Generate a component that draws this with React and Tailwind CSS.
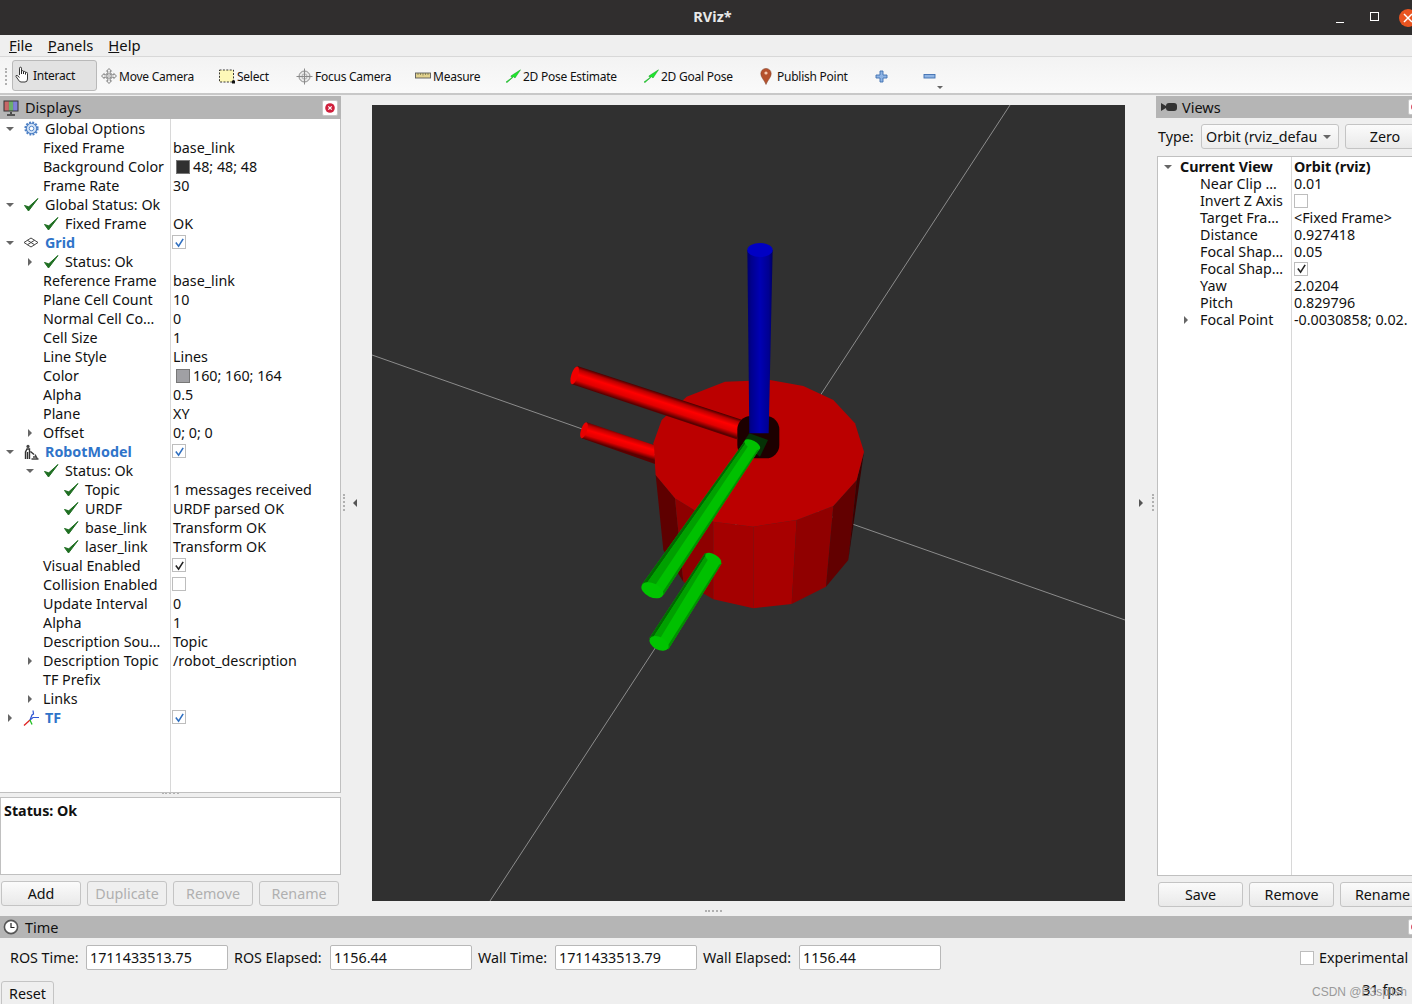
import { Fragment } from 'react';

const FONT = 'font-["Noto_Sans",sans-serif]';

function Check({ className = 'w-4 h-4' }) {
  return (
    <svg viewBox="0 0 16 16" className={className}>
      <path d="M1.5 8.5 L5.5 14 L15 1.5 L5.8 9.8 Z" fill="#1f6f22" stroke="#1f6f22" strokeWidth="1" strokeLinejoin="round" />
    </svg>
  );
}

function Gear() {
  return (
    <svg viewBox="0 0 16 16" className="w-[15px] h-[15px]">
      <circle cx="8" cy="8" r="5.6" fill="#cfe0f5" stroke="#4c7fc4" strokeWidth="1.2" />
      <circle cx="8" cy="8" r="6.6" fill="none" stroke="#4c7fc4" strokeWidth="2" strokeDasharray="2 1.46" />
      <circle cx="8" cy="8" r="2.4" fill="#fff" stroke="#4c7fc4" />
    </svg>
  );
}

function GridIcon() {
  return (
    <svg viewBox="0 0 16 16" className="w-4 h-4">
      <path d="M8 3 L15 7.5 L8 12 L1 7.5 Z M4.5 5.3 L11.5 9.7 M11.5 5.3 L4.5 9.7" fill="none" stroke="#444" strokeWidth="1" />
    </svg>
  );
}

function RobotIcon() {
  return (
    <svg viewBox="0 0 16 16" className="w-4 h-4">
      <circle cx="5" cy="2.4" r="1.6" fill="#444" />
      <path d="M2.5 15 V8 L4 5 H6.5 V15 M4.5 8 V15 M7.5 7.5 L11 10.5" fill="none" stroke="#333" strokeWidth="1.4" />
      <path d="M8.5 15 H15.5 M12 10.5 L14.5 15 M10 13 H13" fill="none" stroke="#444" strokeWidth="1.4" />
    </svg>
  );
}

function TfIcon() {
  return (
    <svg viewBox="0 0 16 16" className="w-4 h-4">
      <path d="M7 10 L1 15.5" stroke="#e02020" strokeWidth="1.3" />
      <path d="M7 10 L9 5 L10.5 4 L10 .5" stroke="#2f55d4" strokeWidth="1.2" fill="none" />
      <path d="M7 10 L10 7.5 H16" stroke="#2f55d4" strokeWidth="1.2" fill="none" />
      <path d="M7 10 L9 14.5" stroke="#20c020" strokeWidth="1.3" />
    </svg>
  );
}

function CheckBox({ checked, blue }) {
  return (
    <span className="inline-flex w-[14px] h-[14px] items-center justify-center border border-[#bdbdbd] bg-white">
      {checked && (
        <svg viewBox="0 0 12 12" className="w-[11px] h-[11px]">
          <path d="M2 6 L5 10 L10 2" fill="none" stroke={blue ? '#2f6fc0' : '#222'} strokeWidth="1.7" />
        </svg>
      )}
    </span>
  );
}

function Arrow({ dir }) {
  if (dir === 'down') {
    return <span className="w-0 h-0 border-l-[4px] border-r-[4px] border-t-[4px] border-l-transparent border-r-transparent border-t-[#666]" />;
  }
  if (dir === 'right') {
    return <span className="w-0 h-0 border-t-[4px] border-b-[4px] border-l-[4px] border-t-transparent border-b-transparent border-l-[#666]" />;
  }
  return null;
}

const indent = ['pl-[5px]', 'pl-[25px]', 'pl-[45px]'];

const displayRows = [
  { d: 0, arrow: 'down', icon: <Gear />, name: 'Global Options' },
  { d: 1, name: 'Fixed Frame', value: 'base_link' },
  { d: 1, name: 'Background Color', swatch: '#303030', value: '48; 48; 48' },
  { d: 1, name: 'Frame Rate', value: '30' },
  { d: 0, arrow: 'down', icon: <Check />, name: 'Global Status: Ok' },
  { d: 1, icon: <Check />, name: 'Fixed Frame', value: 'OK' },
  { d: 0, arrow: 'down', icon: <GridIcon />, name: 'Grid', link: true, box: 'blue' },
  { d: 1, arrow: 'right', icon: <Check />, name: 'Status: Ok' },
  { d: 1, name: 'Reference Frame', value: 'base_link' },
  { d: 1, name: 'Plane Cell Count', value: '10' },
  { d: 1, name: 'Normal Cell Co…', value: '0' },
  { d: 1, name: 'Cell Size', value: '1' },
  { d: 1, name: 'Line Style', value: 'Lines' },
  { d: 1, name: 'Color', swatch: '#a0a0a4', value: '160; 160; 164' },
  { d: 1, name: 'Alpha', value: '0.5' },
  { d: 1, name: 'Plane', value: 'XY' },
  { d: 1, arrow: 'right', name: 'Offset', value: '0; 0; 0' },
  { d: 0, arrow: 'down', icon: <RobotIcon />, name: 'RobotModel', link: true, box: 'blue' },
  { d: 1, arrow: 'down', icon: <Check />, name: 'Status: Ok' },
  { d: 2, icon: <Check />, name: 'Topic', value: '1 messages received' },
  { d: 2, icon: <Check />, name: 'URDF', value: 'URDF parsed OK' },
  { d: 2, icon: <Check />, name: 'base_link', value: 'Transform OK' },
  { d: 2, icon: <Check />, name: 'laser_link', value: 'Transform OK' },
  { d: 1, name: 'Visual Enabled', box: 'on' },
  { d: 1, name: 'Collision Enabled', box: 'off' },
  { d: 1, name: 'Update Interval', value: '0' },
  { d: 1, name: 'Alpha', value: '1' },
  { d: 1, name: 'Description Sou…', value: 'Topic' },
  { d: 1, arrow: 'right', name: 'Description Topic', value: '/robot_description' },
  { d: 1, name: 'TF Prefix' },
  { d: 1, arrow: 'right', name: 'Links' },
  { d: 0, arrow: 'right', icon: <TfIcon />, name: 'TF', link: true, box: 'blue' },
];

const viewRows = [
  { value: '0.01', name: 'Near Clip …' },
  { name: 'Invert Z Axis', box: 'off' },
  { name: 'Target Fra…', value: '<Fixed Frame>' },
  { name: 'Distance', value: '0.927418' },
  { name: 'Focal Shap…', value: '0.05' },
  { name: 'Focal Shap…', box: 'on' },
  { name: 'Yaw', value: '2.0204' },
  { name: 'Pitch', value: '0.829796' },
  { name: 'Focal Point', value: '-0.0030858; 0.02.', arrow: true },
];

function ValueCell({ row }) {
  return (
    <div className="flex-1 h-full flex items-center pl-[3px] whitespace-nowrap overflow-hidden">
      {row.swatch && (
        <span className={`w-[14px] h-[14px] ml-[3px] mr-[3px] border border-[#777] ${row.swatch === '#303030' ? 'bg-[#303030]' : 'bg-[#a0a0a4]'}`} />
      )}
      {row.value}
      {row.box && <span className="-ml-[1px] -mt-[1px] flex"><CheckBox checked={row.box !== 'off'} blue={row.box === 'blue'} /></span>}
    </div>
  );
}

function DisplayRow({ row }) {
  return (
    <div className="flex h-[19px]">
      <div className={`w-[170px] shrink-0 flex items-center whitespace-nowrap overflow-hidden ${indent[row.d]}`}>
        <span className="w-[10px] shrink-0 flex justify-center"><Arrow dir={row.arrow} /></span>
        <span className="ml-[8px]" />
        {row.icon && <span className="w-4 mr-[6px] shrink-0 flex justify-center">{row.icon}</span>}
        <span className={row.link ? 'font-bold text-[#2f74c9]' : ''}>{row.name}</span>
      </div>
      <ValueCell row={row} />
    </div>
  );
}

function QtButton({ children, disabled, className = '' }) {
  return (
    <button className={`h-[25px] shrink-0 rounded-[3px] border border-[#c4c4c4] text-center ${disabled ? 'text-[#b0b0b0] bg-[#efefef]' : 'text-[#111] bg-gradient-to-b from-[#fbfbfb] to-[#e9e9e9] border-[#b8b8b8]'} ${className}`}>
      {children}
    </button>
  );
}

function CloseBtn() {
  return (
    <span className="w-[16px] h-[16px] rounded-[2px] bg-white border border-[#c8c8c8] flex items-center justify-center shrink-0">
      <svg viewBox="0 0 10 10" className="w-[10px] h-[10px]">
        <circle cx="5" cy="5" r="4.8" fill="#d0203c" />
        <path d="M3.3 3.3 L6.7 6.7 M6.7 3.3 L3.3 6.7" stroke="#fff" strokeWidth="1.2" />
      </svg>
    </span>
  );
}

function Monitor() {
  return (
    <svg viewBox="0 0 16 16" className="w-4 h-4">
      <rect x="0.5" y="0.5" width="15" height="11" fill="#333" />
      <rect x="1.5" y="1.5" width="4.4" height="9" fill="#c86868" />
      <rect x="5.9" y="1.5" width="4.2" height="9" fill="#6cae6c" />
      <rect x="10.1" y="1.5" width="4.4" height="9" fill="#8080d8" />
      <path d="M8 12 V14 M4 15 H12" stroke="#333" strokeWidth="1.6" />
    </svg>
  );
}

function HandIcon() {
  return (
    <svg viewBox="0 0 16 18" className="w-4 h-[18px]">
      <path d="M4.5 9 V2.2 a1 1 0 0 1 2 0 V8 V5.6 a1 1 0 0 1 2 0 V8 V6.4 a1 1 0 0 1 2 0 V8.4 V7.4 a1 1 0 0 1 2 0 V13 q0 3 -2.5 3 H6 q-1.5 0 -2.5 -2 L1 10.5 q-.3 -1.5 1.2 -1 L4.5 11.5" fill="#fff" stroke="#222" strokeWidth="0.9" />
    </svg>
  );
}

function MoveIcon() {
  return (
    <svg viewBox="0 0 16 16" className="w-4 h-4">
      <path d="M8 .5 L10.5 3.2 H9.2 V6.8 H12.8 V5.5 L15.5 8 L12.8 10.5 V9.2 H9.2 V12.8 H10.5 L8 15.5 L5.5 12.8 H6.8 V9.2 H3.2 V10.5 L.5 8 L3.2 5.5 V6.8 H6.8 V3.2 H5.5 Z" fill="#f3f3f3" stroke="#666" strokeWidth="0.8" />
      <path d="M5 5.5 H11 M5 8 H11 M5 10.5 H11 M5.5 5 V11 M8 5 V11 M10.5 5 V11" stroke="#999" strokeWidth="0.5" />
    </svg>
  );
}

function SelectIcon() {
  return (
    <svg viewBox="0 0 16 15" className="w-4 h-[15px]">
      <rect x="0.5" y="1" width="14" height="12" fill="#fdf8b8" stroke="#222" strokeWidth="0.9" strokeDasharray="2 1.4" />
      <rect x="13" y="11.5" width="3" height="3" fill="#111" />
    </svg>
  );
}

function FocusIcon() {
  return (
    <svg viewBox="0 0 17 17" className="w-[17px] h-[17px]">
      <circle cx="8.5" cy="8.5" r="5.5" fill="#e8e8e8" stroke="#8a8a8a" />
      <circle cx="8.5" cy="8.5" r="2.6" fill="none" stroke="#999" strokeWidth="0.7" />
      <path d="M8.5 .5 V16.5 M.5 8.5 H16.5" stroke="#8a8a8a" strokeWidth="1" />
    </svg>
  );
}

function RulerIcon() {
  return (
    <svg viewBox="0 0 16 16" className="w-4 h-4">
      <rect x="0.5" y="5" width="15" height="5" fill="#e2d28e" stroke="#5a5a5a" strokeWidth="0.9" />
      <path d="M3 5 V7 M5.5 5 V7 M8 5 V7.5 M10.5 5 V7 M13 5 V7" stroke="#6a6a4a" strokeWidth="0.7" />
    </svg>
  );
}

function GreenArrow() {
  return (
    <svg viewBox="0 0 16 14" className="w-4 h-[14px]">
      <path d="M1 13 L7 8.5 L5.8 7 L15.5 .8 L10 9 L8.6 7.8 L2 13.6 Z" fill="#1de82c" stroke="#129a1e" strokeWidth="0.5" />
    </svg>
  );
}

function PinIcon() {
  return (
    <svg viewBox="0 0 12 17" className="w-[12px] h-[17px]">
      <path d="M6 16.5 C4 11.5 .8 9.5 .8 5.6 A5.2 5.2 0 0 1 11.2 5.6 C11.2 9.5 8 11.5 6 16.5 Z" fill="#b5512d" stroke="#7a3a22" strokeWidth="0.5" />
      <circle cx="6" cy="5" r="1.6" fill="#f4c9b0" />
    </svg>
  );
}

function PlusIcon() {
  return (
    <svg viewBox="0 0 13 13" className="w-[13px] h-[13px]">
      <path d="M5 1 H8 V5 H12 V8 H8 V12 H5 V8 H1 V5 H5 Z" fill="#8fb4e4" stroke="#3f6fb0" strokeWidth="0.9" />
    </svg>
  );
}

function MinusIcon() {
  return (
    <svg viewBox="0 0 13 13" className="w-[13px] h-[13px]">
      <rect x="1" y="4.5" width="11" height="3.5" fill="#8fb4e4" stroke="#3f6fb0" strokeWidth="0.9" />
    </svg>
  );
}

const tools = [
  { label: 'Move Camera', icon: <MoveIcon />, w: 'w-[118px]' },
  { label: 'Select', icon: <SelectIcon />, w: 'w-[77px]' },
  { label: 'Focus Camera', icon: <FocusIcon />, w: 'w-[119px]' },
  { label: 'Measure', icon: <RulerIcon />, w: 'w-[90px]' },
  { label: '2D Pose Estimate', icon: <GreenArrow />, w: 'w-[138px]', gap: 'gap-[2px]' },
  { label: '2D Goal Pose', icon: <GreenArrow />, w: 'w-[117px]', gap: 'gap-[2px]' },
  { label: 'Publish Point', icon: <PinIcon />, w: 'w-[115px]', gap: 'gap-[5px]' },
];

// reference-crop coordinates, scaled by the group transform
const pts = (list) => list.map((p) => p.join(',')).join(' ');

function Scene() {
  const facets = [
    ['#5e0000', [[347, 735], [405, 805], [430, 1055], [370, 960]]],
    ['#8e0000', [[405, 805], [520, 875], [520, 1108], [430, 1055]]],
    ['#a40000', [[520, 875], [640, 890], [640, 1135], [520, 1108]]],
    ['#a80000', [[640, 890], [770, 870], [755, 1122], [640, 1135]]],
    ['#900000', [[770, 870], [880, 828], [858, 1070], [755, 1122]]],
    ['#620000', [[880, 828], [950, 750], [925, 990], [858, 1070]]],
    ['#3c0000', [[950, 750], [972, 665], [925, 990]]],
  ];
  const top = [[340, 640], [365, 570], [440, 500], [555, 455], [690, 450], [790, 468], [880, 510], [945, 580], [972, 665], [950, 750], [880, 828], [770, 870], [640, 890], [520, 875], [405, 805], [347, 735]];
  return (
    <svg viewBox="372 105 753 796" className="w-[753px] h-[796px] block">
      <defs>
        <linearGradient id="blueTube" gradientUnits="userSpaceOnUse" x1="622" y1="0" x2="698" y2="0">
          <stop offset="0" stopColor="#00006a" />
          <stop offset="0.15" stopColor="#00008c" />
          <stop offset="0.5" stopColor="#0000b4" />
          <stop offset="0.85" stopColor="#000090" />
          <stop offset="1" stopColor="#000060" />
        </linearGradient>
        <linearGradient id="redTube" gradientUnits="userSpaceOnUse" x1="360" y1="490" x2="342" y2="545">
          <stop offset="0" stopColor="#500000" />
          <stop offset="0.15" stopColor="#b80000" />
          <stop offset="0.4" stopColor="#ff0000" />
          <stop offset="0.7" stopColor="#e00000" />
          <stop offset="0.95" stopColor="#5a0000" />
        </linearGradient>
        <linearGradient id="redTube2" gradientUnits="userSpaceOnUse" x1="240" y1="605" x2="225" y2="655">
          <stop offset="0" stopColor="#500000" />
          <stop offset="0.2" stopColor="#c00000" />
          <stop offset="0.45" stopColor="#ff0000" />
          <stop offset="0.75" stopColor="#e00000" />
          <stop offset="1" stopColor="#5a0000" />
        </linearGradient>
      </defs>
      <rect x="372" y="105" width="753" height="796" fill="#303030" />
      <g stroke="#8c8c8c" strokeWidth="1" fill="none">
        <path d="M1010 105 L490 901" />
        <path d="M372 355 L1125 620" />
      </g>
      <g transform="translate(540 230) scale(0.33333)">
        {facets.map(([fill, p]) => <polygon key={fill} points={pts(p)} fill={fill} />)}
        <polygon points={pts(top)} fill="#bb0000" />
        <polygon points="112,408 608,570 590,628 94,462" fill="url(#redTube)" />
        <ellipse cx="104" cy="436" rx="10" ry="28" transform="rotate(18 104 436)" fill="#f00000" />
        <polygon points="140,577 342,645 345,702 125,625" fill="url(#redTube2)" />
        <ellipse cx="132" cy="601" rx="9" ry="25" transform="rotate(18 132 601)" fill="#e80000" />
        <rect x="592" y="558" width="126" height="127" rx="40" fill="#1d0000" />
        <polygon points="622,60 698,60 686,610 628,610" fill="url(#blueTube)" />
        <ellipse cx="660" cy="60" rx="38" ry="21" fill="#0000c4" />
        <polygon points="628,610 684,630 660,680 608,640" fill="#063206" />
        {/* long green tube: dark edge, flat face, shaded band */}
        <polygon points="615,632 660,655 370,1095 305,1065" fill="#00c000" />
        <polygon points="615,632 620,635 314,1069 305,1065" fill="#006800" />
        <polygon points="620,635 630,640 336,1080 314,1069" fill="#00a000" />
        <polygon points="656,653 660,655 370,1095 364,1092" fill="#009000" />
        <ellipse cx="637" cy="644" rx="26" ry="12" transform="rotate(27 637 644)" fill="#00c000" />
        <ellipse cx="337" cy="1081" rx="35" ry="21" transform="rotate(25 337 1081)" fill="#00c400" />
        {/* short green tube */}
        <polygon points="495,970 545,1000 385,1258 328,1225" fill="#00c000" />
        <polygon points="495,970 500,973 335,1229 328,1225" fill="#006800" />
        <polygon points="500,973 510,979 352,1239 335,1229" fill="#00a000" />
        <polygon points="541,998 545,1000 385,1258 379,1254" fill="#009000" />
        <ellipse cx="520" cy="986" rx="27" ry="13" transform="rotate(30 520 986)" fill="#00c000" />
        <ellipse cx="357" cy="1240" rx="31" ry="19" transform="rotate(28 357 1240)" fill="#00c400" />
      </g>
    </svg>
  );
}

function TimeField({ label, value, labelW }) {
  return (
    <Fragment>
      <span className={`shrink-0 whitespace-nowrap ${labelW}`}>{label}</span>
      <span className="w-[142px] h-[25px] shrink-0 mr-[6px] rounded-[2px] border border-[#b8b8b8] bg-white pl-[3px] flex items-center">{value}</span>
    </Fragment>
  );
}

function SplitDots({ className }) {
  return <span className={`absolute border-dotted border-[#b0b0b0] ${className}`} />;
}

export default function App() {
  return (
    <div className={`relative w-[1412px] h-[1004px] overflow-hidden bg-[#efefef] text-[#111] text-[14.3px] leading-[19px] ${FONT}`}>
      {/* title bar */}
      <div className="relative h-[35px] bg-[#302e2e] flex items-center justify-center">
        <span className="ml-[13px] mb-[2px] font-bold text-[14.5px] text-[#e8e8e8]">RViz*</span>
        <div className="absolute right-0 top-0 h-[35px] flex items-center">
          <span className="w-[8px] h-[1px] bg-white mt-[10px]" />
          <span className="w-[9px] h-[9px] border border-white ml-[26px] mb-[2px]" />
          <span className="w-[18px] h-[18px] rounded-full bg-[#e95420] ml-[20px] -mr-[5px] flex items-center justify-center">
            <svg viewBox="0 0 10 10" className="w-[10px] h-[10px]"><path d="M1 1 L9 9 M9 1 L1 9" stroke="#fff" strokeWidth="1.5" /></svg>
          </span>
        </div>
      </div>

      {/* menu bar */}
      <div className="h-[22px] border-b border-[#d8d8d8] flex items-center pl-[9px] gap-[15px] text-[14.8px]">
        <span><u>F</u>ile</span>
        <span><u>P</u>anels</span>
        <span><u>H</u>elp</span>
      </div>

      {/* toolbar */}
      <div className="relative h-[38px] border-b-2 border-[#c8c8c8] bg-gradient-to-b from-[#f3f3f3] to-[#fafafa] flex items-center pl-[12px] text-[12px] tracking-[-0.25px]">
        <SplitDots className="left-[5px] top-[11px] h-[17px] w-[2px] border-l-2" />
        <div className="w-[85px] h-[31px] shrink-0 rounded-[3px] border border-[#b9b9b9] bg-[#e2e2e2] flex items-center gap-[2px] pl-[2px]">
          <HandIcon />
          <span>Interact</span>
        </div>
        {tools.map((t) => (
          <div key={t.label} className={`${t.w} shrink-0 flex items-center pl-[4px] pt-[2px] ${t.gap || 'gap-[2px]'} whitespace-nowrap`}>
            <span className="shrink-0 flex">{t.icon}</span>
            <span>{t.label}</span>
          </div>
        ))}
        <div className="w-[48px] shrink-0 pl-[4px] pt-[2px] flex"><PlusIcon /></div>
        <div className="relative w-[48px] shrink-0 pl-[4px] pt-[2px] flex">
          <MinusIcon />
          <span className="absolute left-[18px] top-[18px] w-0 h-0 border-l-[3px] border-r-[3px] border-t-[3px] border-l-transparent border-r-transparent border-t-[#666]" />
        </div>
      </div>

      {/* main area */}
      <div className="relative mt-[1px] h-[820px] flex">
        <SplitDots className="left-[150px] top-[696px] w-[17px] h-[2px] border-t-2 ml-[12px]" />
        <SplitDots className="left-[705px] top-[814px] w-[17px] h-[2px] border-t-2" />
        {/* displays dock */}
        <div className="w-[341px] shrink-0 flex flex-col">
          <div className="h-[23px] bg-[#b5b5b5] flex items-center pl-[3px] pr-[3px] text-[14.5px]">
            <Monitor />
            <span className="ml-[6px] flex-1">Displays</span>
            <CloseBtn />
          </div>
          <div className="relative h-[674px] bg-white border-r border-b border-[#c0c0c0]">
            <div className="absolute left-[170px] top-0 bottom-0 w-[1px] bg-[#d8d8d8]" />
            {displayRows.map((row, i) => <DisplayRow key={i} row={row} />)}
          </div>
          <div className="mt-[4px] h-[78px] bg-white border border-[#c0c0c0] pl-[3px] pt-[3px] font-bold">Status: Ok</div>
          <div className="mt-[6px] flex gap-[6px] pl-[1px]">
            <QtButton className="w-[80px]">Add</QtButton>
            <QtButton className="w-[80px]" disabled>Duplicate</QtButton>
            <QtButton className="w-[80px]" disabled>Remove</QtButton>
            <QtButton className="w-[80px]" disabled>Rename</QtButton>
          </div>
        </div>

        {/* left splitter */}
        <div className="relative w-[31px] shrink-0 flex items-center justify-center pb-[7px] pr-[3px]">
          <SplitDots className="left-[2px] top-[398px] h-[17px] w-[2px] border-l-2" />
          <span className="w-0 h-0 border-t-[4px] border-b-[4px] border-r-[4px] border-t-transparent border-b-transparent border-r-[#555]" />
        </div>

        {/* 3D view */}
        <div className="w-[753px] shrink-0 pt-[9px]">
          <Scene />
        </div>

        {/* right splitter */}
        <div className="relative w-[31px] shrink-0 flex items-center justify-center pb-[7px]">
          <SplitDots className="right-[2px] top-[398px] h-[17px] w-[2px] border-l-2" />
          <span className="w-0 h-0 border-t-[4px] border-b-[4px] border-l-[4px] border-t-transparent border-b-transparent border-l-[#555]" />
        </div>

        {/* views dock */}
        <div className="w-[268px] shrink-0 flex flex-col">
          <div className="h-[22px] bg-[#b5b5b5] flex items-center pl-[5px] text-[14.5px]">
            <svg viewBox="0 0 16 10" className="w-4 h-[10px]">
              <path d="M0 1 L5 4 V6 L0 9 Z" fill="#333" />
              <rect x="5" y="1" width="11" height="8" rx="3" fill="#333" />
            </svg>
            <span className="ml-[5px] flex-1">Views</span>
            <CloseBtn />
          </div>
          <div className="mt-[6px] h-[25px] flex items-center pl-[2px]">
            <span className="w-[43px] shrink-0">Type:</span>
            <div className="w-[138px] h-[25px] shrink-0 rounded-[3px] border border-[#c4c4c4] bg-gradient-to-b from-[#fbfbfb] to-[#ececec] flex items-center pl-[4px] overflow-hidden">
              <span className="w-[111px] overflow-hidden whitespace-nowrap">Orbit (rviz_default_plugins)</span>
              <span className="ml-[6px] w-0 h-0 border-l-[4px] border-r-[4px] border-t-[4px] border-l-transparent border-r-transparent border-t-[#666]" />
            </div>
            <QtButton className="ml-[6px] w-[80px]">Zero</QtButton>
          </div>
          <div className="relative ml-[1px] mt-[7px] h-[720px] bg-white border border-[#c0c0c0] border-r-0 pt-[1px]">
            <div className="absolute left-[133px] top-0 bottom-0 w-[1px] bg-[#d8d8d8]" />
            <div className="flex h-[17px] items-center font-bold">
              <span className="w-[133px] shrink-0 flex items-center pl-[6px]">
                <span className="w-[8px] flex"><Arrow dir="down" /></span>
                <span className="ml-[8px]">Current View</span>
              </span>
              <span className="pl-[3px]">Orbit (rviz)</span>
            </div>
            {viewRows.map((row, i) => (
              <div key={i} className="flex h-[17px] items-center">
                <span className="w-[133px] shrink-0 flex items-center pl-[26px] whitespace-nowrap overflow-hidden">
                  <span className="w-[8px] shrink-0 flex">{row.arrow && <Arrow dir="right" />}</span>
                  <span className="ml-[8px]">{row.name}</span>
                </span>
                <span className="pl-[3px] whitespace-nowrap flex items-center">
                  {row.value}
                  {row.box && <CheckBox checked={row.box === 'on'} />}
                </span>
              </div>
            ))}
          </div>
          <div className="mt-[6px] flex gap-[6px] pl-[2px]">
            <QtButton className="w-[85px]">Save</QtButton>
            <QtButton className="w-[85px]">Remove</QtButton>
            <QtButton className="w-[85px]">Rename</QtButton>
          </div>
        </div>
      </div>

      {/* time dock */}
      <div className="h-[22px] bg-[#b5b5b5] flex items-center pl-[3px] text-[14.5px] -mr-[12px]">
        <svg viewBox="0 0 16 16" className="w-4 h-4">
          <circle cx="8" cy="8" r="6.6" fill="#fff" stroke="#555" strokeWidth="1.6" />
          <path d="M8 4 V8.5 H11.5" fill="none" stroke="#222" strokeWidth="1.2" />
        </svg>
        <span className="ml-[6px] flex-1">Time</span>
        <CloseBtn />
      </div>
      <div className="mt-[7px] h-[25px] flex items-center pl-[10px]">
        <TimeField label="ROS Time:" value="1711433513.75" labelW="w-[76px]" />
        <TimeField label="ROS Elapsed:" value="1156.44" labelW="w-[96px]" />
        <TimeField label="Wall Time:" value="1711433513.79" labelW="w-[77px]" />
        <TimeField label="Wall Elapsed:" value="1156.44" labelW="w-[96px]" />
        <span className="ml-[353px] mr-[5px] shrink-0 flex"><CheckBox /></span>
        <span className="whitespace-nowrap">Experimental</span>
      </div>
      <div className="mt-[11px] flex justify-between">
        <button className="ml-[1px] w-[53px] h-[30px] rounded-[3px] border border-[#c4c4c4] pb-[6px] text-center">Reset</button>
        <span className="mr-[9px] mt-[-1px]">31 fps</span>
      </div>
      <span className="absolute left-[1312px] top-[983px] text-[12px] text-[#9a9a9a] font-['Liberation_Sans',sans-serif] whitespace-nowrap">CSDN @E3splish</span>
    </div>
  );
}
